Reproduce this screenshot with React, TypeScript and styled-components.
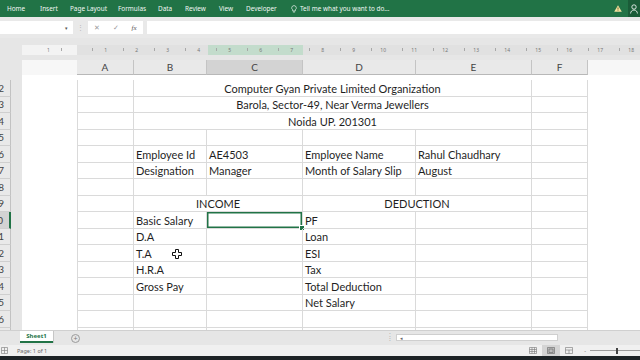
import styled, { createGlobalStyle, css } from 'styled-components'

const GlobalStyle = createGlobalStyle`
  html, body { margin: 0; padding: 0; }
  body {
    width: 640px;
    height: 360px;
    overflow: hidden;
    background: #e6e6e6;
    font-family: Lato, "Liberation Sans", sans-serif;
  }
`

const Window = styled.div`
  width: 640px;
  height: 360px;
  display: flex;
  flex-direction: column;
  overflow: hidden;
`

// ribbon tabs
const Ribbon = styled.div`
  height: 17px;
  flex: none;
  background: #217346;
  display: flex;
  align-items: center;
  padding-left: 7px;
  color: #f2f7f4;
  font-family: "Noto Sans", sans-serif;
  font-size: 6.4px;
`
const Tab = styled.span<{ $w: number }>`
  width: ${p => p.$w}px;
  flex: none;
  white-space: nowrap;
`
const TellMe = styled.span`
  display: flex;
  align-items: center;
  gap: 3px;
  white-space: nowrap;
`
const RibbonRight = styled.div`
  margin-left: auto;
  display: flex;
  align-items: center;
  gap: 6px;
  height: 100%;
`
const UserBox = styled.div`
  width: 12px;
  height: 100%;
  background: #1a5c38;
  display: flex;
  align-items: center;
  justify-content: center;
`

// formula bar
const FormulaBar = styled.div`
  height: 21px;
  flex: none;
  display: flex;
  align-items: center;
  background: #e9e9e9;
`
const NameBox = styled.div`
  width: 73px;
  height: 13px;
  background: #fff;
  display: flex;
  align-items: center;
  justify-content: flex-end;
  padding-right: 5px;
  box-sizing: border-box;
  font-size: 5px;
  color: #555;
`
const Grip = styled.span`
  width: 15px;
  text-align: center;
  color: #b5b5b5;
  font-size: 7px;
`
const FxBox = styled.div`
  width: 55px;
  height: 13px;
  background: #fff;
  display: flex;
  align-items: center;
  justify-content: space-around;
  color: #9a9a9a;
  font-size: 7px;
`
const Fx = styled.span`
  font-family: "Liberation Serif", serif;
  font-style: italic;
  color: #555;
`
const FormulaInput = styled.div`
  flex: 1;
  height: 13px;
  margin-left: 4px;
  background: #fff;
`

// workspace
const Workspace = styled.div`
  height: 292px;
  flex: none;
  display: flex;
  overflow: hidden;
  background: #e6e6e6;
`
const RowRail = styled.div`
  width: 22px;
  flex: none;
  padding-top: 42px;
  box-sizing: border-box;
  display: flex;
  flex-direction: column;
`
const RowNum = styled.div<{ $active?: boolean }>`
  width: 11px;
  height: 16.5px;
  flex: none;
  box-sizing: border-box;
  display: flex;
  align-items: center;
  justify-content: flex-end;
  padding-right: 6px;
  overflow: hidden;
  font-size: 10px;
  color: #444;
  background: ${p => (p.$active ? '#d3d3d3' : '#e9e9e9')};
  border-bottom: 1px solid #cfcfcf;
  border-right: ${p => (p.$active ? '2px solid #217346' : '1px solid #c2c2c2')};
`
const PageColumn = styled.div`
  flex: 1;
  min-width: 0;
  display: flex;
  flex-direction: column;
`
const Ruler = styled.div`
  margin-top: 7px;
  height: 10px;
  flex: none;
  display: flex;
  font-family: "Noto Sans", sans-serif;
  font-size: 5px;
  color: #777;
`
const RulerMargin = styled.div`
  width: 55px;
  flex: none;
  display: flex;
  justify-content: flex-end;
  background: #f3f3f3;
`
const RulerBody = styled.div`
  flex: 1;
  display: flex;
  background: linear-gradient(to right, #e1e1e1 131px, #c3dccc 131px, #c3dccc 226px, #e1e1e1 226px);
`
const RulerUnit = styled.div<{ $lead?: boolean }>`
  width: 31px;
  flex: none;
  display: flex;
  align-items: center;
  justify-content: ${p => (p.$lead ? 'flex-start' : 'flex-end')};
  padding: 0 1px;
  box-sizing: border-box;
  background: linear-gradient(#a8a8a8, #a8a8a8) no-repeat 15px 3px / 1px 3px;
`
const HeaderRow = styled.div`
  margin-top: 5px;
  height: 15px;
  flex: none;
  display: flex;
  background: #f7f7f7;
`
const Spacer = styled.div`
  width: 55px;
  flex: none;
`
const ColHead = styled.div<{ $w: number; $active?: boolean }>`
  width: ${p => p.$w}px;
  flex: none;
  box-sizing: border-box;
  display: flex;
  align-items: center;
  justify-content: center;
  font-size: 10px;
  color: #444;
  background: ${p => (p.$active ? '#d3d3d3' : '#e9e9e9')};
  border-right: 1px solid #c4c4c4;
  border-bottom: 1px solid #b8b8b8;
  &:first-child {
    border-left: 1px solid #c4c4c4;
  }
`
const SheetBody = styled.div`
  flex: 1;
  display: flex;
  align-items: flex-start;
  padding-top: 5px;
  background: #fff;
`
const Grid = styled.div`
  display: grid;
  grid-template-columns: 56px 73px 96px 113px 116px 56px;
  grid-auto-rows: 16.5px;
  border-left: 1px solid #dadada;
`
const Cell = styled.div<{ $span?: number; $center?: boolean; $selected?: boolean }>`
  grid-column: span ${p => p.$span ?? 1};
  position: relative;
  box-sizing: border-box;
  display: flex;
  align-items: center;
  justify-content: ${p => (p.$center ? 'center' : 'flex-start')};
  padding: 1px 2px 0;
  border-right: 1px solid #dadada;
  border-bottom: 1px solid #dadada;
  font-size: 11px;
  color: #1f1f1f;
  white-space: nowrap;
  ${p =>
    p.$selected &&
    css`
      box-shadow: inset 0 0 0 1.5px #217346;
      &::after {
        content: '';
        position: absolute;
        right: -3px;
        bottom: -3px;
        width: 4px;
        height: 4px;
        background: #217346;
        border: 1px solid #fff;
      }
    `}
`
const Cursor = styled.svg`
  position: absolute;
  left: 38px;
  top: 4px;
`

// bottom bars
const TabBar = styled.div`
  height: 15px;
  flex: none;
  display: flex;
  align-items: flex-start;
  background: #e6e6e6;
  border-top: 1px solid #d0d0d0;
  box-sizing: border-box;
`
const SheetTab = styled.div`
  margin-left: 20px;
  width: 33px;
  height: 12px;
  background: #fff;
  border-bottom: 2px solid #217346;
  box-sizing: border-box;
  display: flex;
  align-items: center;
  justify-content: center;
  font-family: "Noto Sans", sans-serif;
  font-size: 6px;
  font-weight: 700;
  color: #217346;
  box-shadow: 1px 0 0 #c6c6c6;
`
const AddSheet = styled.div`
  margin: 3px 0 0 18px;
  width: 7px;
  height: 7px;
  border: 1px solid #9a9a9a;
  border-radius: 50%;
  display: flex;
  align-items: center;
  justify-content: center;
  font-size: 7px;
  line-height: 1;
  color: #777;
`
const ScrollSep = styled.span`
  margin: 2px 0 0 309px;
  color: #b0b0b0;
  font-size: 7px;
`
const ScrollTrack = styled.div`
  margin: 3px 0 0 5px;
  width: 162px;
  height: 7px;
  background: #fff;
  border: 1px solid #cfcfcf;
  box-sizing: border-box;
  display: flex;
  align-items: center;
  padding-left: 3px;
  font-size: 5px;
  color: #666;
`
const StatusBar = styled.div`
  height: 11px;
  flex: none;
  display: flex;
  align-items: center;
  background: #f0f0f0;
  font-family: "Noto Sans", sans-serif;
  font-size: 5.5px;
  color: #666;
`
const StatusText = styled.span`
  margin-left: 9px;
`
const StatusRight = styled.div`
  margin-left: auto;
  display: flex;
  align-items: center;
  height: 100%;
`
const ViewBtn = styled.div<{ $active?: boolean }>`
  width: 18px;
  height: 100%;
  display: flex;
  align-items: center;
  justify-content: center;
  background: ${p => (p.$active ? '#d4d4d4' : 'transparent')};
`
const ZoomSlider = styled.div`
  display: flex;
  align-items: center;
  margin-left: 6px;
  gap: 4px;
  color: #666;
`
const SliderTrack = styled.div`
  width: 50px;
  height: 1px;
  background: #9c9c9c;
  display: flex;
  align-items: center;
  padding-left: 26px;
  box-sizing: border-box;
`
const SliderThumb = styled.div`
  width: 2px;
  height: 6px;
  background: #444;
`
const Taskbar = styled.div`
  flex: 1;
  background: #1d2326;
`

type CellData = { t?: string; span?: number; center?: boolean; sel?: boolean; cursor?: boolean }

const blank = (): CellData[] => [{}, {}, {}, {}, {}, {}]

const rows: CellData[][] = [
  [{}, { t: 'Computer Gyan Private Limited Organization', span: 4, center: true }, {}],
  [{}, { t: 'Barola, Sector-49, Near Verma Jewellers', span: 4, center: true }, {}],
  [{}, { t: 'Noida UP. 201301', span: 4, center: true }, {}],
  blank(),
  [{}, { t: 'Employee Id' }, { t: 'AE4503' }, { t: 'Employee Name' }, { t: 'Rahul Chaudhary' }, {}],
  [{}, { t: 'Designation' }, { t: 'Manager' }, { t: 'Month of Salary Slip' }, { t: 'August' }, {}],
  blank(),
  [{}, { t: 'INCOME', span: 2, center: true }, { t: 'DEDUCTION', span: 2, center: true }, {}],
  [{}, { t: 'Basic Salary' }, { sel: true }, { t: 'PF' }, {}, {}],
  [{}, { t: 'D.A' }, {}, { t: 'Loan' }, {}, {}],
  [{}, { t: 'T.A', cursor: true }, {}, { t: 'ESI' }, {}, {}],
  [{}, { t: 'H.R.A' }, {}, { t: 'Tax' }, {}, {}],
  [{}, { t: 'Gross Pay' }, {}, { t: 'Total Deduction' }, {}, {}],
  [{}, {}, {}, { t: 'Net Salary' }, {}, {}],
  blank(),
  blank(),
]

const columns = [
  { name: 'A', w: 57 },
  { name: 'B', w: 73 },
  { name: 'C', w: 96, active: true },
  { name: 'D', w: 113 },
  { name: 'E', w: 116 },
  { name: 'F', w: 56 },
]

const tabs = [
  { name: 'Home', w: 33 },
  { name: 'Insert', w: 30 },
  { name: 'Page Layout', w: 48 },
  { name: 'Formulas', w: 40 },
  { name: 'Data', w: 27 },
  { name: 'Review', w: 34 },
  { name: 'View', w: 27 },
  { name: 'Developer', w: 45 },
]

const App = () => {
  return (
    <Window>
      <GlobalStyle />
      <Ribbon>
        {tabs.map(t => (
          <Tab key={t.name} $w={t.w}>
            {t.name}
          </Tab>
        ))}
        <TellMe>
          <svg width="6" height="8" viewBox="0 0 6 8">
            <path d="M3 0.6a2.3 2.3 0 0 0-1.3 4.2v1.2h2.6V4.8A2.3 2.3 0 0 0 3 0.6z" fill="none" stroke="#eef5f0" strokeWidth="0.7" />
            <path d="M1.9 7h2.2" stroke="#eef5f0" strokeWidth="0.7" />
          </svg>
          Tell me what you want to do...
        </TellMe>
        <RibbonRight>
          <svg width="8" height="7" viewBox="0 0 8 7">
            <path d="M4 0.3L7.8 6.7H0.2z" fill="#f2e2a0" />
            <path d="M4 2.4v2.2M4 5.3v0.6" stroke="#5a4a10" strokeWidth="0.8" />
          </svg>
          <UserBox>
            <svg width="8" height="10" viewBox="0 0 8 10">
              <circle cx="4" cy="3" r="2.2" fill="none" stroke="#fff" strokeWidth="0.8" />
              <path d="M0.6 9.5c0-2 1.5-3.5 3.4-3.5s3.4 1.5 3.4 3.5" fill="none" stroke="#fff" strokeWidth="0.8" />
            </svg>
          </UserBox>
        </RibbonRight>
      </Ribbon>

      <FormulaBar>
        <NameBox>▾</NameBox>
        <Grip>⋮</Grip>
        <FxBox>
          <span>✕</span>
          <span>✓</span>
          <Fx>fx</Fx>
        </FxBox>
        <FormulaInput />
      </FormulaBar>

      <Workspace>
        <RowRail>
          {rows.map((_, i) => (
            <RowNum key={i} $active={i + 2 === 10}>
              {i + 2}
            </RowNum>
          ))}
        </RowRail>
        <PageColumn>
          <Ruler>
            <RulerMargin>
              <RulerUnit $lead>1</RulerUnit>
            </RulerMargin>
            <RulerBody>
              {Array.from({ length: 18 }, (_, i) => (
                <RulerUnit key={i}>{i + 1}</RulerUnit>
              ))}
            </RulerBody>
          </Ruler>
          <HeaderRow>
            <Spacer />
            {columns.map(c => (
              <ColHead key={c.name} $w={c.w} $active={c.active}>
                {c.name}
              </ColHead>
            ))}
          </HeaderRow>
          <SheetBody>
            <Spacer />
            <Grid>
              {rows.map((row, r) =>
                row.map((c, k) => (
                  <Cell key={`${r}-${k}`} $span={c.span} $center={c.center} $selected={c.sel}>
                    {c.t}
                    {c.cursor && (
                      <Cursor width="10" height="10" viewBox="0 0 10 10">
                        <path
                          d="M3.5 0.5h3v3h3v3h-3v3h-3v-3h-3v-3h3z"
                          fill="#fff"
                          stroke="#111"
                          strokeWidth="1"
                        />
                      </Cursor>
                    )}
                  </Cell>
                ))
              )}
            </Grid>
          </SheetBody>
        </PageColumn>
      </Workspace>

      <TabBar>
        <SheetTab>Sheet1</SheetTab>
        <AddSheet>+</AddSheet>
        <ScrollSep>⁞</ScrollSep>
        <ScrollTrack>◂</ScrollTrack>
      </TabBar>

      <StatusBar>
        <svg width="7" height="7" viewBox="0 0 7 7" style={{ marginLeft: 1 }}>
          <path d="M0.5 0.5h6v6h-6zM0.5 3.5h6M3.5 0.5v6" fill="none" stroke="#888" strokeWidth="0.7" />
        </svg>
        <StatusText>Page: 1 of 1</StatusText>
        <StatusRight>
          <ViewBtn>
            <svg width="8" height="7" viewBox="0 0 8 7">
              <path d="M0.5 0.5h7v6h-7zM0.5 2.5h7M0.5 4.5h7M3 0.5v6M5.5 0.5v6" fill="none" stroke="#777" strokeWidth="0.6" />
            </svg>
          </ViewBtn>
          <ViewBtn $active>
            <svg width="8" height="7" viewBox="0 0 8 7">
              <path d="M0.5 0.5h7v6h-7z" fill="#bcbcbc" stroke="#666" strokeWidth="0.6" />
              <path d="M2 2h4v3.5h-4z" fill="none" stroke="#666" strokeWidth="0.6" />
            </svg>
          </ViewBtn>
          <ViewBtn>
            <svg width="8" height="7" viewBox="0 0 8 7">
              <path d="M0.5 0.5h7v6h-7zM0.5 3h7M4 3v3.5" fill="none" stroke="#777" strokeWidth="0.6" />
            </svg>
          </ViewBtn>
          <ZoomSlider>
            <span>-</span>
            <SliderTrack>
              <SliderThumb />
            </SliderTrack>
          </ZoomSlider>
        </StatusRight>
      </StatusBar>
      <Taskbar />
    </Window>
  )
}

export default App
